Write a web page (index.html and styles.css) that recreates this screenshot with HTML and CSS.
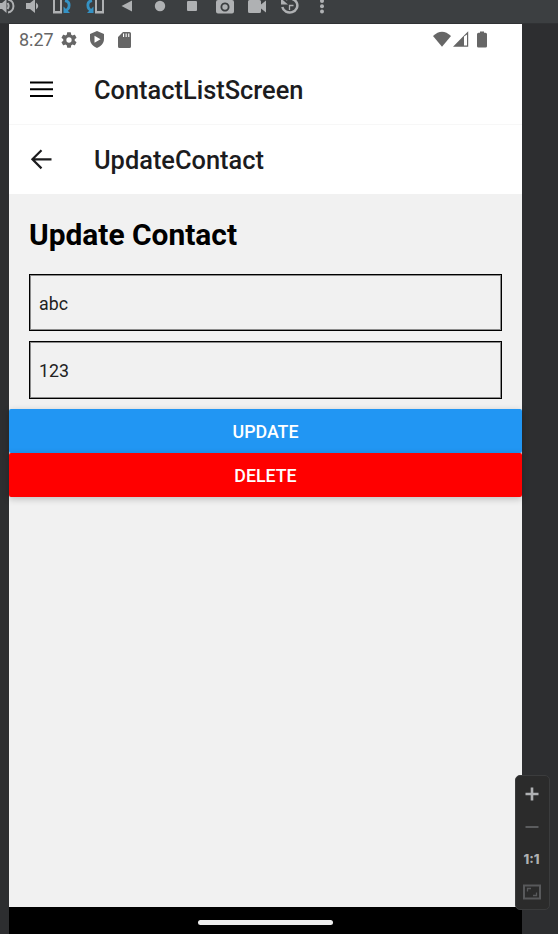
FILE: index.html
```html
<!DOCTYPE html>
<html lang="en">
<head>
<meta charset="utf-8">
<title>Update Contact</title>
<link rel="stylesheet" href="styles.css">
</head>
<body>
<div class="emulator">
  <div class="toolbar">
    <svg width="16" height="24" viewBox="0 0 16 24"><path d="M-1 3h3l4.500-4v14l-4.500-4h-3z"/><path d="M7.500 3q2.200 3 0 6M8-.5a6.600 6.600 0 0 1 0 13" class="line"/></svg>
    <svg width="32" height="24" viewBox="16 0 32 24"><path d="M26 3h4l5-4v14l-5-4h-4z"/><path d="M36 2.500q4.500 3.500 0 7z"/></svg>
    <svg width="32" height="24" viewBox="48 0 32 24"><path d="M54 -2h7v14.500h-7z" class="line"/><path d="M54 11h7v2h-7z"/><path d="M65 .5c5.500 1 5.500 8 0 10.500" class="blue"/><path d="M63.500 6.500v6.500h6.500z" class="bluefill"/></svg>
    <svg width="32" height="24" viewBox="80 0 32 24"><path d="M96 -2h7v14.500h-7z" class="line"/><path d="M96 11h7v2h-7z"/><path d="M92 .5c-5.500 1-5.500 8 0 10.500" class="blue"/><path d="M93.500 6.500v6.500h-6.500z" class="bluefill"/></svg>
    <svg width="32" height="24" viewBox="112 0 32 24"><path d="M121.500 6l10.500-5.500v11z"/></svg>
    <svg width="32" height="24" viewBox="144 0 32 24"><circle cx="160" cy="6" r="5.200"/></svg>
    <svg width="32" height="24" viewBox="176 0 32 24"><rect x="187" y="1" width="10" height="10" rx="1"/></svg>
    <svg width="32" height="24" viewBox="208 0 32 24"><path fill-rule="evenodd" d="M218 0h3l1.500-2h5l1.500 2h3q2 0 2 2v9.500q0 2-2 2h-14q-2 0-2-2v-9.500q0-2 2-2zm7 2.500a4.500 4.500 0 1 0 .01 0z"/><circle cx="225" cy="7" r="2.700"/></svg>
    <svg width="32" height="24" viewBox="240 0 32 24"><path d="M249.500 0h10q1.500 0 1.500 1.500v3l5-4v12l-5-4v3q0 1.500-1.500 1.500h-10q-1.500 0-1.500-1.500v-10q0-1.500 1.500-1.500z"/></svg>
    <svg width="32" height="24" viewBox="272 0 32 24"><path d="M282.300 7a7.600 7 0 1 0 3.500-7.500" class="line reset"/><path d="M281-1.500v6h7z"/><path d="M289.500 10v-4.500h4" class="thin"/></svg>
    <svg width="32" height="24" viewBox="304 0 32 24"><circle cx="322" cy="1" r="2"/><circle cx="322" cy="6.300" r="2"/><circle cx="322" cy="11.600" r="2"/></svg>
  </div>
  <main class="device">
    <div class="status">
      <span class="clock">8:27</span>
      <svg class="gear" width="16" height="16" viewBox="2 2 20 20"><path d="M19.140 12.940c.04-.3.06-.61.06-.94s-.02-.64-.07-.94l2.030-1.580a.49.49 0 0 0 .12-.61l-1.920-3.320a.488.488 0 0 0-.59-.22l-2.390.96c-.5-.38-1.030-.7-1.620-.94l-.36-2.540a.484.484 0 0 0-.48-.41h-3.840c-.24 0-.43.17-.47.41l-.36 2.540c-.59.24-1.130.57-1.620.94l-2.390-.96c-.22-.08-.47 0-.59.22L2.740 8.870c-.12.21-.08.47.12.61l2.030 1.580c-.05.3-.09.63-.09.940s.02.64.07.94l-2.030 1.580a.49.49 0 0 0-.12.61l1.920 3.320c.12.22.37.29.59.22l2.390-.96c.5.38 1.030.7 1.620.94l.36 2.540c.05.24.24.41.48.41h3.840c.24 0 .44-.17.470-.41l.36-2.540c.59-.24 1.130-.56 1.620-.94l2.390.96c.22.08.47 0 .59-.22l1.920-3.320c.12-.22.07-.47-.12-.61zM12 15.300a3.300 3.300 0 1 1 0-6.600 3.300 3.300 0 0 1 0 6.600z"/></svg>
      <svg class="shield" width="14" height="17" viewBox="0 0 14 17"><path fill-rule="evenodd" d="M7 0l7 3v5c0 4-3 7.500-7 9-4-1.500-7-5-7-9V3zM4.500 4.800v7l6-3.500z"/></svg>
      <svg class="sd" width="13" height="16" viewBox="0 0 13 16"><path fill-rule="evenodd" d="M5 0h6.500Q13 0 13 1.500v13q0 1.500-1.500 1.500h-10Q0 16 0 14.500V5zM5 1.500v3.500h1.100V1.500zm2.600 0v3.500h1.100V1.500zm2.600 0v3.500h1.100V1.500z"/></svg>
      <svg class="signals" width="56" height="17" viewBox="0 0 56 17"><path d="M0 5Q9-3.500 18 5L9 15.700z"/><path fill-rule="evenodd" d="M35.200 .2V15.700H20zM31 5.500v9h3V3.500z"/><path d="M47 .5h4v1.200h1.500q1.500 0 1.500 1.500v12q0 1.300-1.500 1.300h-7Q44 16.500 44 15.200V3.200q0-1.500 1.500-1.500H47z"/></svg>
    </div>
    <header class="bar bar-first">
      <svg width="24" height="24" viewBox="0 0 24 24"><path d="M0 4.500h23M0 11.300h23M0 17.900h23" class="menu"/></svg>
      <h1>ContactListScreen</h1>
    </header>
    <header class="bar">
      <svg width="24" height="24" viewBox="0 0 24 24"><path d="M21.500 11.300H2.500M11.500 2.200L2.400 11.300l9.100 9.100" class="back"/></svg>
      <h1>UpdateContact</h1>
    </header>
    <section class="content">
      <h2>Update Contact</h2>
      <input class="field name" type="text" value="abc" aria-label="Name">
      <input class="field" type="text" value="123" aria-label="Phone">
      <button class="btn update">UPDATE</button>
      <button class="btn delete">DELETE</button>
    </section>
    <footer class="nav"><div class="pill"></div></footer>
  </main>
  <aside class="zoom">
    <svg width="33" height="33" viewBox="0 0 33 33"><path d="M9.500 18h13M16 11.500v13" class="plus"/></svg>
    <svg width="33" height="33" viewBox="0 0 33 33"><path d="M9.500 18h13" class="minus"/></svg>
    <span class="ratio">1:1</span>
    <svg width="33" height="33" viewBox="0 0 33 33"><path d="M8 10.500h16v13H8z" class="frame"/><path d="M11.500 16.500v-3H15M17 20.500h3.500v-3" class="corners"/></svg>
  </aside>
</div>
</body>
</html>
```
FILE: styles.css
```css
* { box-sizing: border-box; }
body { margin: 0; font-family: Roboto, sans-serif; }
svg { display: block; flex: none; }
.emulator {
  position: relative;
  width: 558px;
  height: 934px;
  overflow: hidden;
  background: #2d2e30;
  display: flex;
  flex-direction: column;
}
.toolbar {
  display: flex;
  height: 24px;
  flex: none;
  background: #3c3f41;
  border-bottom: 1px solid #303234;
  fill: #afb1b3;
}
.line { fill: none; stroke: #afb1b3; stroke-width: 2; }
.reset { stroke-width: 2.5; }
.thin { fill: none; stroke: #afb1b3; stroke-width: 1.3; }
.blue { fill: none; stroke: #3592c4; stroke-width: 2.8; }
.bluefill { fill: #3592c4; }
.device {
  width: 513px;
  margin-left: 9px;
  flex: 1;
  display: flex;
  flex-direction: column;
  background: #f1f1f1;
}
.status {
  display: flex;
  align-items: center;
  height: 31px;
  padding-left: 10px;
  background: #fff;
  color: #666;
  fill: #666;
}
.clock { width: 42px; font-size: 18px; line-height: 31px; }
.gear { margin-right: 13px; }
.shield { margin-right: 14px; }
.signals { margin-left: 302px; }
.bar {
  display: flex;
  align-items: center;
  height: 69px;
  padding-left: 21px;
  gap: 40px;
  background: #fff;
}
.bar-first { height: 70px; border-bottom: 1px solid #f7f7f7; }
.bar h1 {
  margin: 0;
  color: #1c1c1e;
  font-size: 25.4px;
  font-weight: 500;
  line-height: 32px;
}
.bar-first h1 { padding-top: 1px; }
.menu { stroke: #000; stroke-width: 2; }
.back { fill: none; stroke: #1c1c1e; stroke-width: 2.2; }
.content { flex: 1; display: flex; flex-direction: column; }
.content h2 {
  margin: 22px 20px 21px;
  color: #000;
  font-size: 29.9px;
  font-weight: 700;
  line-height: 37px;
}
.field {
  height: 58px;
  margin: 0 20px 10px;
  padding: 0 9px;
  border: 1px solid #000;
  border-radius: 0;
  box-shadow: inset 0 0 0 1px #8c8c8c;
  background: transparent;
  color: #222;
  font: 400 17.8px Roboto, sans-serif;
}
.name { height: 57px; padding-top: 2px; }
.btn {
  height: 44px;
  padding: 0;
  border: 0;
  border-radius: 2px;
  color: #fff;
  font: 500 17.8px Roboto, sans-serif;
  box-shadow: 0 2px 7px rgba(0, 0, 0, .22);
}
.update { background: #2196f3; }
.delete { background: #f00; }
.nav {
  display: flex;
  justify-content: center;
  align-items: center;
  height: 27px;
  padding-top: 3px;
  background: #000;
}
.pill { width: 135px; height: 5px; border-radius: 3px; background: #eee; }
.zoom {
  position: absolute;
  left: 515px;
  top: 775px;
  width: 35px;
  height: 135px;
  border: 1px solid #3b3c3d;
  border-radius: 5px;
  background: #2b2b2b;
}
.ratio {
  display: block;
  height: 33px;
  padding-right: 2px;
  color: #afb1b3;
  font: 800 13px/35px Inter, sans-serif;
  text-align: center;
}
.plus { stroke: #afb1b3; stroke-width: 2.6; }
.minus { stroke: #5b5c5e; stroke-width: 2; }
.frame { fill: none; stroke: #58595b; stroke-width: 2; }
.corners { fill: none; stroke: #58595b; stroke-width: 1.3; }
```
